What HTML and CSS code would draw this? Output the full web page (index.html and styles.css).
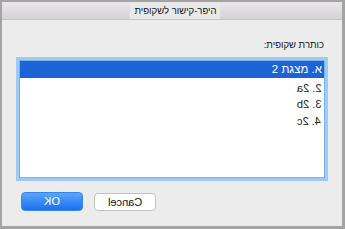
FILE: index.html
```html
<!DOCTYPE html>
<html lang="he">
<head>
    <meta charset="UTF-8">
    <title>היפר-קישור לשקופית</title>
    <link rel="stylesheet" href="styles.css">
</head>
<body>
    <div class="window">
        <div class="titlebar">
            <span class="title" dir="rtl">היפר-קישור לשקופית</span>
        </div>
        <div class="content">
            <div class="label" dir="rtl">כותרת שקופית:</div>
            <div class="listbox" dir="rtl">
                <div class="row selected">א. מצגת 2</div>
                <div class="row"><span class="flip">2. 2a</span></div>
                <div class="row"><span class="flip">3. 2b</span></div>
                <div class="row"><span class="flip">4. 2c</span></div>
            </div>
            <div class="buttons">
                <button class="btn ok"><span class="flip">OK</span></button>
                <button class="btn cancel"><span class="flip">Cancel</span></button>
            </div>
        </div>
    </div>
</body>
</html>
```

FILE: styles.css
```css
html, body {
    margin: 0;
    padding: 0;
}
body {
    font-family: "Liberation Sans", "DejaVu Sans", sans-serif;
    background: #a3a3a3;
    width: 345px;
    height: 229px;
    overflow: hidden;
}
.window {
    box-sizing: border-box;
    width: 345px;
    height: 229px;
    border-style: solid;
    border-color: #a3a3a3;
    border-width: 2px 3px 3px 2px;
    background: #ececec;
}
.titlebar {
    height: 17px;
    border-bottom: 1px solid #c4c2c4;
    background: linear-gradient(#e9e7e9, #d5d3d5);
    display: flex;
    justify-content: center;
}
.title {
    background: #e9e9e9;
    padding: 0 3px 0 4px;
    margin-left: 6px;
    font-size: 9.5px;
    line-height: 17px;
    color: #111;
}
.content {
    padding: 18px 17px 0 17px;
}
.label {
    font-size: 9.5px;
    line-height: 14px;
    color: #111;
    padding-right: 1px;
}
.listbox {
    margin-top: 8px;
    height: 118px;
    box-sizing: border-box;
    background: #fff;
    border: 1px solid #7db3ea;
    box-shadow: 0 0 0 3px #9dcbf5;
}
.row {
    height: 16.4px;
    line-height: 16.4px;
    font-size: 11px;
    color: #222;
    padding-right: 3px;
}
.row.selected {
    height: 17px;
    line-height: 17px;
    margin-bottom: 2px;
    background: #1c64d6;
    color: #fff;
    font-size: 11.5px;
    padding-right: 2px;
}
.flip {
    display: inline-block;
    direction: ltr;
    unicode-bidi: isolate;
    transform: scaleX(-1);
}
.buttons {
    display: flex;
    gap: 11px;
    margin-top: 14px;
}
.btn {
    width: 62px;
    height: 19px;
    padding: 0;
    border-radius: 4px;
    font-family: "Liberation Sans", "DejaVu Sans", sans-serif;
    font-size: 11px;
    line-height: 17px;
}
.ok {
    margin-left: 2px;
    background: linear-gradient(#5aa6fa, #1b6ff0);
    border: 1px solid #3a84ee;
    color: #fff;
}
.cancel {
    margin-top: 1px;
    height: 18px;
    background: #fff;
    border: 1px solid #c2c2c2;
    color: #111;
}
```
